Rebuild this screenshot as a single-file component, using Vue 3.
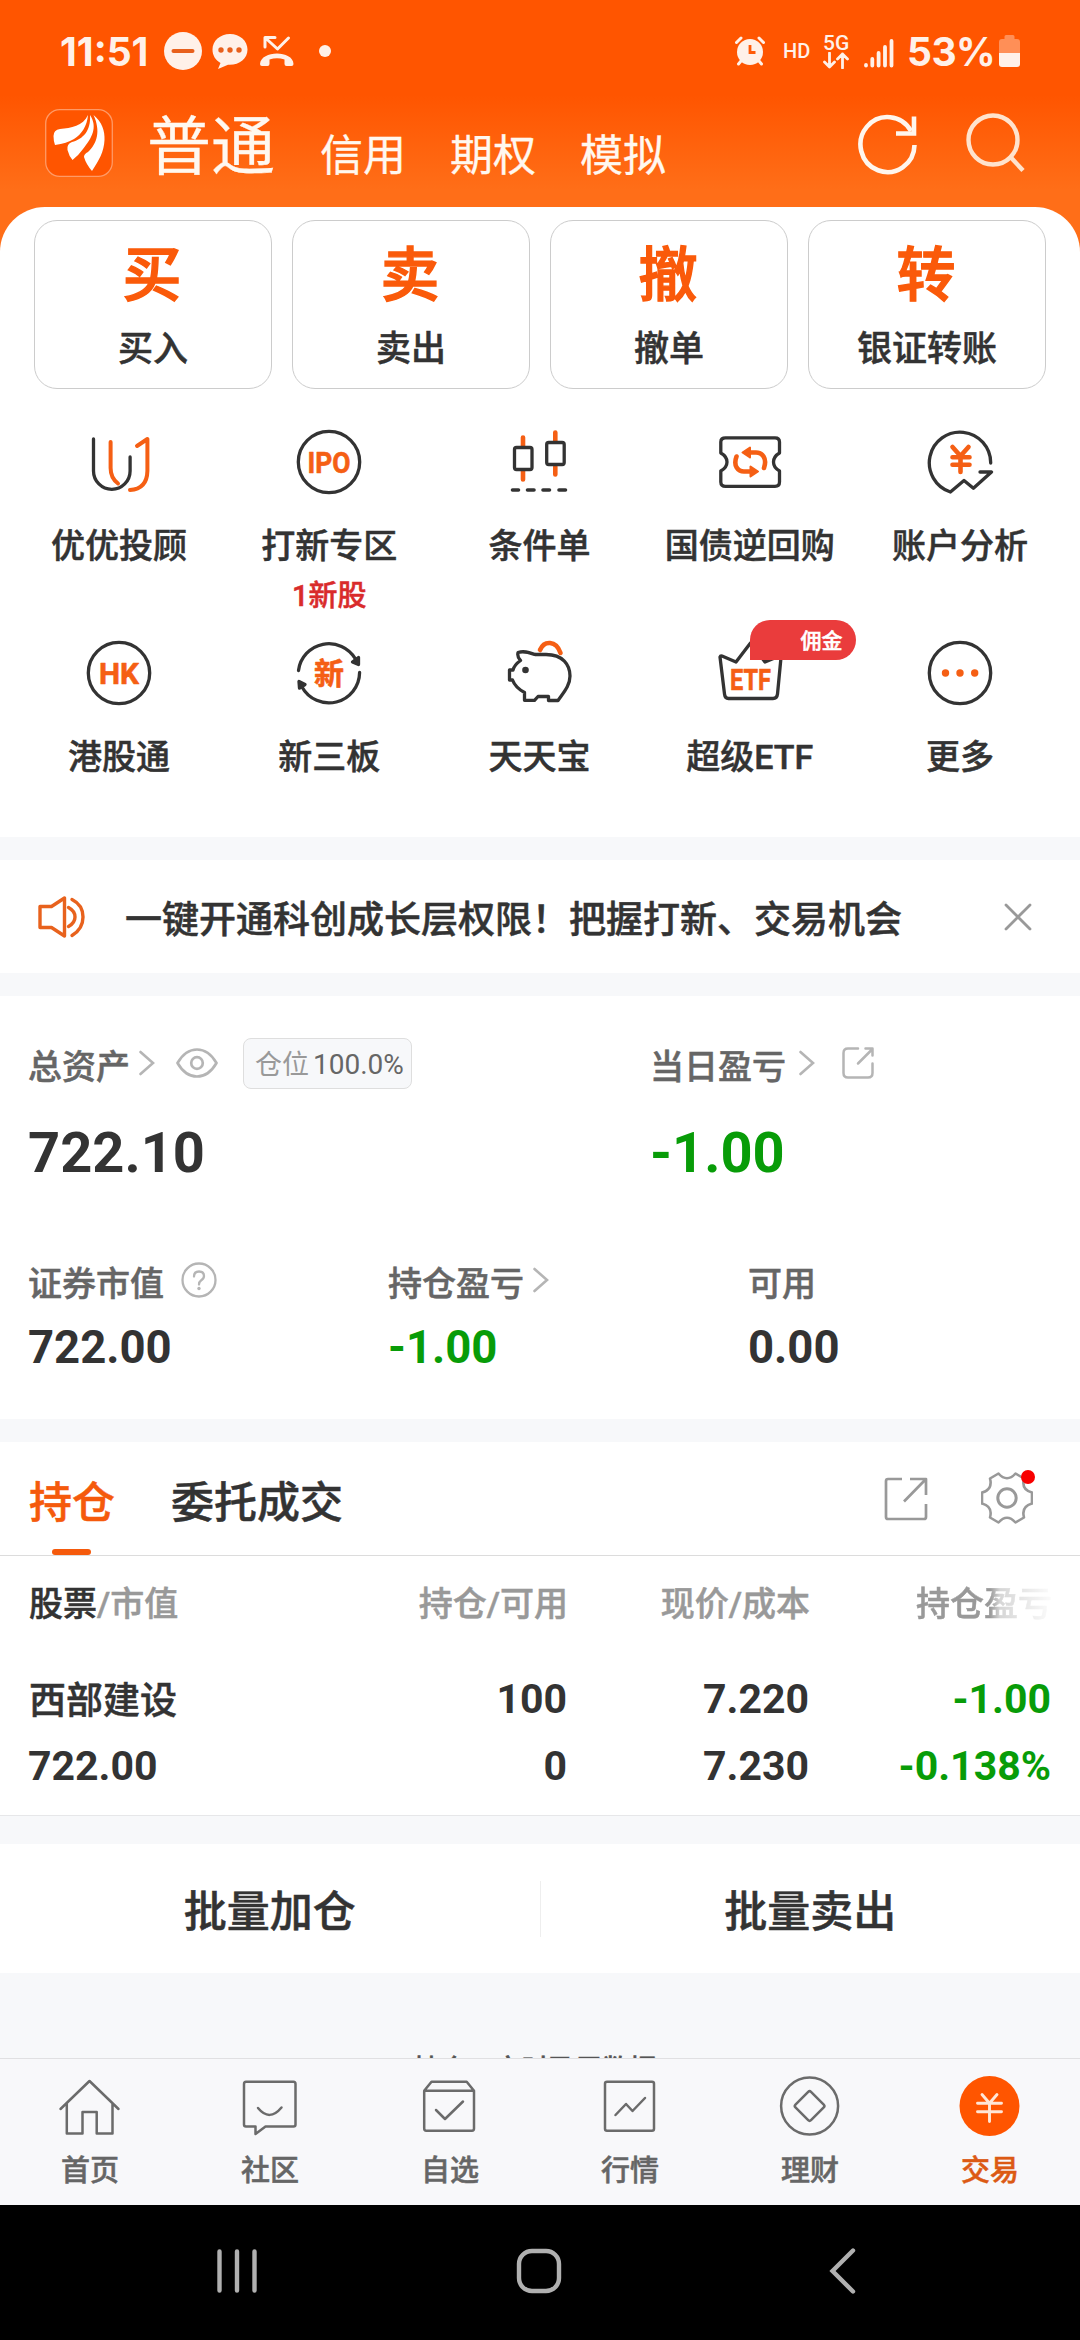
<template>
  <div class="page">
    <div class="top">
      <div class="status">
        <span class="time">11:51</span>
        <svg class="dnd" width="38" height="38" viewBox="0 0 38 38">
          <circle cx="19" cy="19" r="19" fill="#fff1e9" />
          <path d="M9.500 19H28.500" stroke="#e8601c" stroke-width="4" stroke-linecap="round" />
        </svg>
        <svg class="chat" width="36" height="38" viewBox="0 0 36 38">
          <path d="M18 2C8 2 .5 9 .5 17.500c0 6 3 10.500 8 13.500L6 37l10-4.200C27 33.500 35.500 27 35.500 17.500 35.500 9 28 2 18 2z" fill="#fff1e9" />
          <circle cx="9" cy="18" r="2.700" fill="#e8601c" />
          <circle cx="18" cy="18" r="2.700" fill="#e8601c" />
          <circle cx="27" cy="18" r="2.700" fill="#e8601c" />
        </svg>
        <svg class="missed" width="34" height="32" viewBox="0 0 34 32">
          <path d="M5 12V2.500H15M5.500 3L17.500 14L28.500 3" fill="none" stroke="#fff1e9" stroke-width="3" stroke-linecap="round" stroke-linejoin="round" />
          <path d="M0 29C1 15 33 15 33.500 29q0 2-2 2h-5q-2 0-2-2v-4.500q-7.500-2.500-15 0V29q0 2-2 2H2Q0 31 0 29z" fill="#fff1e9" />
        </svg>
        <span class="dot"></span>
        <span class="spacer"></span>
        <svg class="alarm" width="30" height="30" viewBox="0 0 30 30">
          <circle cx="15" cy="16" r="13" fill="#fff1e9" />
          <path d="M1.500 6.500L6 2M28.500 6.500L24 2M6 25L3.500 28M24 25L26.500 28" stroke="#fff1e9" stroke-width="3" stroke-linecap="round" />
          <path d="M15 9V16.500H20.500" fill="none" stroke="#ff5a08" stroke-width="2.800" />
        </svg>
        <span class="hd">HD</span>
        <div class="net">
          <span class="net-label">5G</span>
          <svg width="26" height="17" viewBox="0 0 26 17">
            <path d="M6.500 1V15M1.500 10L6.500 15L11.500 10M19.500 16V2M14.500 7L19.500 2L24.500 7" fill="none" stroke="#fff1e9" stroke-width="2.800" stroke-linecap="round" stroke-linejoin="round" />
          </svg>
        </div>
        <svg class="signal" width="30" height="30" viewBox="0 0 30 30">
          <path d="M2 27.500V27M8.300 27.500V21M14.600 27.500V15M21 27.500V9M27.500 27.500V3" stroke="#fff1e9" stroke-width="3.800" stroke-linecap="round" />
        </svg>
        <span class="percent">53%</span>
        <svg width="21" height="32" viewBox="0 0 21 32">
          <path d="M5.500 1.500Q5.500 0 7 0h7q1.500 0 1.500 1.500V4H18q3 0 3 3v11H0V7q0-3 3-3h2.500z" fill="#ff8f57" />
          <path d="M0 18h21v11q0 3-3 3H3q-3 0-3-3z" fill="#fff1e9" />
        </svg>
      </div>

      <div class="header">
        <svg class="logo" width="68" height="68" viewBox="0 0 68 68">
          <rect x=".7" y=".7" width="66.600" height="66.600" rx="14" fill="#ff5500" stroke="#ff9a66" stroke-width="1.300" />
          <g fill="#fff">
            <path d="M43 6C38 17 26 19 15 20Q8.500 21 8.500 27 8.500 32 10 36C18 35 24 33 29 30 37 25 42 17 43 6z" />
            <path d="M45 6C46 22 38 30 27 33Q21.500 35 22.500 41 24 47 27.500 51 33 47 38 40C47 29 53 18 45 6z" />
            <path d="M48.500 6C57 13 60 22 59.500 31 59 43 54 51 47 62Q41 55 39 48 39 45 43 43C52 35 56 22 48.500 6z" />
          </g>
        </svg>
        <div class="accounts">
          <span class="account active">普通</span>
          <span class="account">信用</span>
          <span class="account">期权</span>
          <span class="account">模拟</span>
        </div>
        <svg class="refresh" width="62" height="64" viewBox="0 0 62 64">
          <path d="M57.500 33A27 27.500 0 1 1 54 19" fill="none" stroke="#fff6ee" stroke-width="4.600" />
          <path d="M57 4.500V21.500H39" fill="none" stroke="#fff6ee" stroke-width="4.600" />
        </svg>
        <svg class="search" width="60" height="64" viewBox="0 0 60 64">
          <circle cx="27" cy="29" r="24.500" fill="none" stroke="#ffe3cd" stroke-width="4.400" />
          <path d="M44.500 46L57 59.500" stroke="#ffe3cd" stroke-width="4.400" />
        </svg>
      </div>

      <div class="sheet">
        <div class="quick">
          <div v-for="item in quick" :key="item.label" class="quick-card">
            <span class="quick-glyph">{{ item.glyph }}</span>
            <span class="quick-label">{{ item.label }}</span>
          </div>
        </div>

        <div class="features">
          <div v-for="item in features" :key="item.icon" class="feature">
            <svg width="68" height="68" viewBox="0 0 68 68" fill="none" stroke="#333" stroke-width="3.300" stroke-linecap="round" stroke-linejoin="round">
              <template v-if="item.icon === 'advisor'">
                <path d="M8.500 11V43A18.300 18.300 0 0 0 45.100 43V29" />
                <path d="M25.600 14V40Q25.600 50 33 55.500M52 18L62.400 11V43Q62 61 45 62" stroke="#f55f14" stroke-width="4" />
              </template>
              <template v-else-if="item.icon === 'ipo'">
                <circle cx="34" cy="34" r="30.700" />
                <text class="icon-text" x="34" y="44.500" textLength="43" lengthAdjust="spacingAndGlyphs">IPO</text>
              </template>
              <template v-else-if="item.icon === 'candles'">
                <path d="M18 9.500V18M18 43V51.500M50.300 4.500V13M50.300 38.500V46.500" stroke="#f55f14" stroke-width="4.600" />
                <rect x="9.500" y="19.500" width="17.500" height="22" rx="2" />
                <rect x="41.700" y="14.500" width="17.500" height="22" rx="2" />
                <path d="M7.500 62H13.500M22.500 62H29M38 62H44.500M54 62H60.500" stroke-width="3.600" />
              </template>
              <template v-else-if="item.icon === 'ticket'">
                <path d="M9.500 9.800H59Q63.500 9.800 63.500 14V25Q57.500 28.500 57.500 34 57.500 39.500 63.500 43V54Q63.500 58.300 59 58.300H9.500Q4.800 58.300 4.800 54V43Q11 39.500 11 34 11 28.500 4.800 25V14Q4.800 9.800 9.500 9.800z" />
                <path d="M48 40C51.500 30 46 24.500 40 24.500H34M20.500 28.500C17 38 22 43.500 28 43.500H34" stroke="#f55f14" stroke-width="4.600" />
                <path d="M26.500 24.500L34 19.500V29.500zM42 43.500L34.500 38.500V48.500z" fill="#f55f14" stroke="#f55f14" stroke-width="2" />
              </template>
              <template v-else-if="item.icon === 'analysis'">
                <path d="M64.700 35A30.700 30.700 0 1 0 24.400 64L38 52.500L47.400 60.300L65.500 44H54" />
                <path d="M26.500 19L34.500 28L42.500 19M34.500 28V44M26.500 29.300H43.500M26.500 36.700H43.500" stroke="#f55f14" stroke-width="4.600" />
              </template>
              <template v-else-if="item.icon === 'hk'">
                <circle cx="34" cy="34" r="30.700" />
                <text class="icon-text" x="34" y="44.500" textLength="40" lengthAdjust="spacingAndGlyphs">HK</text>
              </template>
              <template v-else-if="item.icon === 'neeq'">
                <path d="M3.500 31.500A30.700 30.700 0 0 1 60.500 20M64.600 33.500A30.700 30.700 0 0 1 7 48" />
                <path d="M57.500 23L63.500 18.500V25.500zM4 42.500L4.500 49L10 45.500z" fill="#333" />
                <text class="icon-text" x="34" y="44.500">新</text>
              </template>
              <template v-else-if="item.icon === 'piggy'">
                <path d="M35 11C39 1.500 51 1 55.500 14" stroke="#f55f14" stroke-width="4.600" />
                <path d="M13 13.500C19 11.500 24 13.500 30 15.500H41C58 15.500 65 26 65 37 65 47 58 54 53 61.500H43.500V57.500H33L29.500 61.300H19.500V53.500C13 50 9 45 7.500 41H4.500V31H8C9 27 12 24 15.500 21.500Q12 18 13 13.500z" />
                <circle cx="20.500" cy="31" r="3.300" fill="#333" stroke="none" />
              </template>
              <template v-else-if="item.icon === 'etf'">
                <path d="M4 18Q4.500 16.500 6 17L20 23L34.500 4L49 23L63.500 17Q65.500 16.500 65 18.500L61.500 55Q61 59.500 57 59.500H12.500Q9 59.500 8.500 55z" />
                <text class="icon-text" x="34.500" y="50.500" textLength="41" lengthAdjust="spacingAndGlyphs">ETF</text>
              </template>
              <template v-else>
                <circle cx="34" cy="34" r="30.700" />
                <g fill="#f55f14" stroke="none">
                  <circle cx="19.500" cy="34" r="3.700" />
                  <circle cx="34" cy="34" r="3.700" />
                  <circle cx="48.700" cy="34" r="3.700" />
                </g>
              </template>
            </svg>
            <span class="feature-label">{{ item.label }}</span>
            <span v-if="item.note" class="feature-note">{{ item.note }}</span>
            <span v-if="item.badge" class="feature-badge">{{ item.badge }}</span>
          </div>
        </div>
      </div>
    </div>

    <div class="notice">
      <svg width="48" height="42" viewBox="0 0 48 42" fill="none" stroke="#e8621d" stroke-width="3.400" stroke-linejoin="round">
        <path d="M2 10.500H13.500L26.500 2V40L13.500 31.500H2z" />
        <path d="M30.500 11.500Q37 15 37 21 37 27 30.500 30.500M34 3.500Q45 9 45 21 45 33 34 39.500" stroke-linecap="round" />
      </svg>
      <span class="notice-text">一键开通科创成长层权限！把握打新、交易机会</span>
      <svg class="close" width="28" height="28" viewBox="0 0 28 28">
        <path d="M2 2L26 26M26 2L2 26" stroke="#999" stroke-width="2.800" stroke-linecap="round" />
      </svg>
    </div>

    <div class="assets">
      <div class="asset-main">
        <div class="asset">
          <div class="asset-label">
            总资产
            <svg class="chevron near" width="16" height="26" viewBox="0 0 16 26"><path d="M1.500 2L14 13L1.500 24" /></svg>
            <svg class="eye" width="42" height="30" viewBox="0 0 42 30" fill="none" stroke="#b5b5b5" stroke-width="2.700">
              <path d="M1.500 15C12 -3 30 -3 40.500 15 30 33 12 33 1.500 15z" stroke-linejoin="round" />
              <circle cx="21" cy="15" r="5.800" />
            </svg>
            <span class="position"><span class="position-name">仓位</span>100.0%</span>
          </div>
          <div class="asset-value">722.10</div>
        </div>
        <div class="asset">
          <div class="asset-label">
            当日盈亏
            <svg class="chevron far" width="16" height="26" viewBox="0 0 16 26"><path d="M1.500 2L14 13L1.500 24" /></svg>
            <svg class="share-small" width="32" height="34" viewBox="0 0 32 34" fill="none" stroke="#b5b5b5" stroke-width="2.500" stroke-linecap="round" stroke-linejoin="round">
              <path d="M16 2.500H6Q1.500 2.500 1.500 7V27Q1.500 31.500 6 31.500H26Q30.500 31.500 30.500 27V17.500M16 17.500L30 3.500M23.500 2.500H30.500V9.500" />
            </svg>
          </div>
          <div class="asset-value down">-1.00</div>
        </div>
      </div>
      <div class="asset-sub">
        <div class="asset small">
          <div class="asset-label">
            证券市值
            <svg class="help" width="36" height="36" viewBox="0 0 36 36" fill="none" stroke="#b5b5b5" stroke-width="2.300">
              <circle cx="18" cy="18" r="16.500" />
              <path d="M13 14.500Q13 9.500 18 9.500 23 9.500 23 14 23 16.500 20 18.500 18 20 18 22.500" stroke-linecap="round" />
              <circle cx="18" cy="26.500" r="1.700" fill="#b5b5b5" stroke="none" />
            </svg>
          </div>
          <div class="asset-value">722.00</div>
        </div>
        <div class="asset small">
          <div class="asset-label">
            持仓盈亏
            <svg class="chevron near" width="16" height="26" viewBox="0 0 16 26"><path d="M1.500 2L14 13L1.500 24" /></svg>
          </div>
          <div class="asset-value down">-1.00</div>
        </div>
        <div class="asset small">
          <div class="asset-label">可用</div>
          <div class="asset-value">0.00</div>
        </div>
      </div>
    </div>

    <div class="holdings">
      <div class="tabs">
        <span class="tab active">持仓</span>
        <span class="tab">委托成交</span>
        <svg class="share" width="44" height="44" viewBox="0 0 44 44" fill="none" stroke="#999" stroke-width="2.700" stroke-linejoin="round">
          <path d="M18 2H4Q2 2 2 4V40Q2 42 4 42H40Q42 42 42 40V27M26 2H42V18M41 3L20 24.500" />
        </svg>
        <div class="settings">
          <svg width="52" height="52" viewBox="0 0 52 52" fill="none" stroke="#999" stroke-width="2.600" stroke-linejoin="round">
            <path d="M17.500 1.500Q26 11 34.500 1.500L43 6.500Q40 17.500 51 20.500V31.500Q40 34.500 43 45.500L34.500 50.500Q26 41 17.500 50.500L9 45.500Q12 34.500 1 31.500V20.500Q12 17.500 9 6.500z" />
            <circle cx="26" cy="26" r="9.200" stroke-width="3" />
          </svg>
          <span class="red-dot"></span>
        </div>
      </div>
      <div class="row head">
        <span class="name"><b>股票</b>/市值</span>
        <span>持仓/可用</span>
        <span>现价/成本</span>
        <span class="fade">持仓盈亏</span>
      </div>
      <div v-for="stock in stocks" :key="stock.name" class="stock">
        <div class="row">
          <span class="name">{{ stock.name }}</span>
          <span>{{ stock.amount }}</span>
          <span>{{ stock.price }}</span>
          <span class="down">{{ stock.profit }}</span>
        </div>
        <div class="row second">
          <span class="name">{{ stock.value }}</span>
          <span>{{ stock.available }}</span>
          <span>{{ stock.cost }}</span>
          <span class="down">{{ stock.rate }}</span>
        </div>
      </div>
    </div>

    <div class="batch">
      <span>批量加仓</span>
      <i class="batch-line"></i>
      <span>批量卖出</span>
    </div>

    <div class="more"><span>持仓、实时盈亏数据</span></div>

    <div class="tabbar">
      <div v-for="item in menus" :key="item.icon" class="menu" :class="{ active: item.icon === 'trade' }">
        <svg width="68" height="68" viewBox="0 0 68 68" fill="none" stroke="#6b6b6b" stroke-width="2.500" stroke-linecap="round" stroke-linejoin="round">
          <template v-if="item.icon === 'home'">
            <path d="M4.500 37L33.500 9L62.500 37M10.800 32V61.500H26.500V40H40.700V61.500H56.500V32" />
          </template>
          <template v-else-if="item.icon === 'social'">
            <path d="M10 9.700H57.500Q59.500 9.700 59.500 12V52.500Q59.500 54.500 57.500 54.500H29.500L19.500 62V54.500H10Q8 54.500 8 52.500V12Q8 9.700 10 9.700z" />
            <path d="M22 36Q33.500 50 45.500 35.500" />
          </template>
          <template v-else-if="item.icon === 'watch'">
            <path d="M8.200 18.700L15.500 9.700H50.700L58 18.700V56.500Q58 58.700 56 58.700H10.200Q8.200 58.700 8.200 56.500V18.700H58M20 38L29 47L47 29.500" />
          </template>
          <template v-else-if="item.icon === 'market'">
            <rect x="9" y="9.700" width="49" height="49" rx="2" />
            <path d="M19.500 43L30 32L36.500 39L49 26" />
          </template>
          <template v-else-if="item.icon === 'wealth'">
            <circle cx="33.600" cy="34" r="28.500" />
            <rect x="22.600" y="23" width="22" height="22" rx="2" transform="rotate(45 33.600 34)" />
          </template>
          <template v-else>
            <circle cx="33.500" cy="34" r="30" fill="#ff5500" stroke="none" />
            <path d="M26 22.500L33.500 31.300L41 22.500M33.500 31.300V49.500M21.500 31.300H45.500M21.500 39.700H45.500" stroke="#ffe6d6" stroke-width="2.900" />
          </template>
        </svg>
        <span class="menu-label">{{ item.label }}</span>
      </div>
    </div>

    <div class="navbar">
      <svg width="40" height="44" viewBox="0 0 40 44">
        <path d="M2.500 2.500V41.500M20 2.500V41.500M37.500 2.500V41.500" stroke="#b0b0b0" stroke-width="4.400" stroke-linecap="round" />
      </svg>
      <svg class="nav-home" width="46" height="46" viewBox="0 0 46 46">
        <rect x="3" y="3" width="40" height="40" rx="13" fill="none" stroke="#b0b0b0" stroke-width="4.400" />
      </svg>
      <svg class="nav-back" width="28" height="46" viewBox="0 0 28 46">
        <path d="M25 2.500L4.500 23L25 43.500" fill="none" stroke="#b0b0b0" stroke-width="4.400" stroke-linecap="round" />
      </svg>
    </div>
  </div>
</template>

<script setup>
const quick = [
  { glyph: '买', label: '买入' },
  { glyph: '卖', label: '卖出' },
  { glyph: '撤', label: '撤单' },
  { glyph: '转', label: '银证转账' }
]

const features = [
  { icon: 'advisor', label: '优优投顾' },
  { icon: 'ipo', label: '打新专区', note: '1新股' },
  { icon: 'candles', label: '条件单' },
  { icon: 'ticket', label: '国债逆回购' },
  { icon: 'analysis', label: '账户分析' },
  { icon: 'hk', label: '港股通' },
  { icon: 'neeq', label: '新三板' },
  { icon: 'piggy', label: '天天宝' },
  { icon: 'etf', label: '超级ETF', badge: '佣金' },
  { icon: 'more', label: '更多' }
]

const stocks = [
  {
    name: '西部建设',
    value: '722.00',
    amount: '100',
    available: '0',
    price: '7.220',
    cost: '7.230',
    profit: '-1.00',
    rate: '-0.138%'
  }
]

const menus = [
  { icon: 'home', label: '首页' },
  { icon: 'social', label: '社区' },
  { icon: 'watch', label: '自选' },
  { icon: 'market', label: '行情' },
  { icon: 'wealth', label: '理财' },
  { icon: 'trade', label: '交易' }
]
</script>

<style>
body {
  margin: 0;
  background: #f7f8fa;
}
</style>

<style scoped>
.page {
  width: 1080px;
  height: 2340px;
  overflow: hidden;
  background: #f7f8fa;
  color: #333;
  font-family: Roboto, "Noto Sans CJK SC", sans-serif;
  font-weight: 500;
  -webkit-text-stroke-width: 0.5px;
}

.page * {
  box-sizing: border-box;
}

svg {
  display: block;
  flex: none;
}

span {
  white-space: nowrap;
}

.down {
  color: #089c08;
}

/* status bar and header */
.top {
  background: linear-gradient(#ff5500 0, #ff5500 95px, #ff6e18 190px);
}

.status {
  display: flex;
  align-items: center;
  height: 102px;
  padding: 0 60px;
  color: #fff1e9;
  -webkit-text-stroke-width: 0;
}

.time,
.percent {
  font-family: Inter, Roboto, sans-serif;
  font-size: 39px;
  font-weight: 700;
}

.time {
  width: 103.5px;
}

.chat {
  margin-left: 10px;
}

.missed {
  margin-left: 12.5px;
}

.dot {
  width: 12px;
  height: 12px;
  margin-left: 25px;
  border-radius: 50%;
  background: #fff1e9;
}

.spacer {
  flex: 1;
}

.hd {
  width: 25px;
  margin: 0 15px 0 18px;
  font-size: 20px;
}

.net {
  width: 26px;
}

.net-label {
  display: block;
  font-size: 21px;
  line-height: 18px;
  padding-top: 1px;
}

.signal {
  margin: 3px 13px 0 15px;
}

.percent {
  width: 92px;
  letter-spacing: -0.5px;
}

.header {
  display: flex;
  height: 105px;
  padding: 7px 54px 0 45px;
}

.accounts {
  display: flex;
  flex: 1;
  align-items: flex-end;
  height: 74px;
  padding-left: 34px;
  color: #fff8f0;
  font-weight: 400;
  -webkit-text-stroke-width: 0.3px;
}

.account {
  margin-right: 44px;
  font-size: 43px;
  line-height: 53px;
}

.account.active {
  margin-right: 45px;
  font-size: 64px;
  line-height: 70px;
}

.refresh {
  margin: 3px 47px 0 0;
}

.search {
  margin: 2px 0 0;
}

/* white sheet */
.sheet {
  height: 630px;
  padding-top: 13px;
  border-radius: 45px 45px 0 0;
  background: #fff;
}

.quick {
  display: grid;
  grid-template-columns: repeat(4, 238px);
  gap: 20px;
  padding-left: 34px;
}

.quick-card {
  display: flex;
  flex-direction: column;
  align-items: center;
  height: 169px;
  padding-top: 20px;
  border: 1px solid #ccc;
  border-radius: 23px;
}

.quick-glyph {
  margin-right: 2px;
  color: #fa5a0a;
  font-size: 59px;
  line-height: 70px;
  -webkit-text-stroke-width: 1.4px;
}

.quick-label {
  margin-top: 17px;
  font-size: 35px;
  line-height: 44px;
}

.features {
  display: grid;
  grid-template-columns: repeat(5, 1fr);
  grid-auto-rows: 211px;
  padding: 39px 15px 0 14px;
}

.feature {
  position: relative;
  display: flex;
  flex-direction: column;
  align-items: center;
}

.icon-text {
  fill: #f55f14;
  stroke: #f55f14;
  stroke-width: 0.6px;
  font-size: 30px;
  font-weight: 700;
  text-anchor: middle;
}

.feature-label {
  margin-top: 28px;
  font-size: 34px;
  line-height: 44px;
}

.feature-note {
  margin-top: 10px;
  color: #d92b2b;
  font-size: 29px;
  line-height: 36px;
}

.feature-badge {
  position: absolute;
  top: -19px;
  left: 105px;
  width: 106px;
  height: 40px;
  padding-left: 51px;
  border-radius: 20px 20px 20px 0;
  background: #ea3c3c;
  color: #fff;
  font-size: 21px;
  line-height: 43px;
}

/* notice */
.notice {
  display: flex;
  align-items: center;
  height: 113px;
  margin: 23px 0;
  padding: 0 48px 0 38px;
  background: #fff;
}

.notice-text {
  flex: 1;
  padding: 9px 0 0 39px;
  font-size: 37px;
  line-height: 50px;
}

/* assets */
.assets {
  height: 423px;
  padding-top: 42px;
  background: #fff;
}

.asset-main {
  display: grid;
  grid-template-columns: 622px 1fr;
  padding-left: 28px;
}

.asset-sub {
  display: grid;
  grid-template-columns: repeat(3, 360px);
  padding: 70px 0 0 28px;
}

.asset-label {
  display: flex;
  align-items: center;
  height: 51px;
  padding-top: 7px;
  color: #666;
  font-size: 34px;
  line-height: 50px;
}

.asset-label svg {
  margin-bottom: 8px;
}

.chevron {
  fill: none;
  stroke: #b5b5b5;
  stroke-width: 2.6;
  stroke-linecap: round;
}

.chevron.near {
  margin-left: 9px;
}

.chevron.far {
  margin-left: 13px;
}

.eye {
  margin-left: 21px;
}

.help {
  margin-left: 17px;
}

.share-small {
  margin-left: 27px;
}

.position {
  height: 51px;
  margin: 0 0 7px 25px;
  padding: 0 7px 0 11px;
  border: 1px solid #dedede;
  border-radius: 8px;
  background: #f7f8fa;
  font-size: 28px;
  font-weight: 400;
  line-height: 51px;
  -webkit-text-stroke-width: 0;
}

.position-name {
  margin-right: 4px;
  color: #999;
  font-size: 27px;
}

.asset-value {
  margin-top: 32px;
  font-size: 56px;
  font-weight: 700;
  line-height: 64px;
  -webkit-text-stroke-width: 0;
}

.small .asset-value {
  margin-top: 14px;
  font-size: 45.5px;
  line-height: 56px;
}

/* holdings */
.holdings {
  height: 374px;
  margin-top: 23px;
  border-bottom: 1px solid #e6e7e9;
  background: #fff;
}

.tabs {
  display: flex;
  align-items: center;
  height: 114px;
  padding: 0 47px 0 29px;
  border-bottom: 1px solid #dcdcdc;
}

.tab {
  position: relative;
  height: 114px;
  margin-right: 56px;
  font-size: 43px;
  line-height: 122px;
}

.tab.active {
  color: #f55a0c;
}

.tab.active::after {
  content: "";
  position: absolute;
  bottom: 1px;
  left: 23px;
  width: 39px;
  height: 6px;
  border-radius: 3px;
  background: #f55a0c;
}

.share {
  margin-left: auto;
}

.settings {
  position: relative;
  margin: -2px 0 0 53px;
}

.red-dot {
  position: absolute;
  top: -2px;
  left: 40px;
  width: 14px;
  height: 14px;
  border-radius: 50%;
  background: #f80000;
}

.row {
  display: grid;
  grid-template-columns: 240px 299px 242px 242px;
  padding-left: 28px;
  text-align: right;
  font-size: 41px;
  font-weight: 700;
  line-height: 67px;
  -webkit-text-stroke-width: 0;
}

.row .name {
  text-align: left;
}

.row.head {
  padding-left: 29px;
  color: #999;
  font-size: 34px;
  font-weight: 500;
  line-height: 96px;
  -webkit-text-stroke-width: 0.5px;
}

.row.head b {
  color: #333;
  font-weight: 500;
}

.fade {
  -webkit-mask-image: linear-gradient(90deg, #000 180px, rgba(0, 0, 0, 0.4) 190px, transparent 246px);
  mask-image: linear-gradient(90deg, #000 180px, rgba(0, 0, 0, 0.4) 190px, transparent 246px);
}

.stock {
  padding-top: 14px;
}

.stock .row:first-child .name {
  padding: 4px 0 0 1px;
  font-size: 37px;
  font-weight: 500;
  line-height: 63px;
  -webkit-text-stroke-width: 0.5px;
}

/* batch actions */
.batch {
  display: flex;
  align-items: center;
  height: 129px;
  margin-top: 28px;
  background: #fff;
}

.batch span {
  flex: 1;
  padding-top: 7px;
  text-align: center;
  font-size: 43px;
  line-height: 60px;
}

.batch-line {
  width: 1px;
  height: 56px;
  background: #eee;
}

.more {
  height: 85px;
  padding: 81px 10px 0 0;
  overflow: hidden;
  text-align: center;
  color: #555;
  font-size: 27px;
  line-height: 32px;
}

/* bottom tabs */
.tabbar {
  display: grid;
  grid-template-columns: repeat(6, 180px);
  height: 147px;
  padding-top: 13px;
  border-top: 1px solid #e0e0e2;
  background: #f8f8fa;
}

.menu {
  display: flex;
  flex-direction: column;
  align-items: center;
  color: #666;
}

.menu.active {
  color: #dc5a14;
}

.menu-label {
  margin-top: 12px;
  font-size: 29px;
  line-height: 38px;
}

.navbar {
  display: flex;
  align-items: center;
  height: 135px;
  padding: 0 0 3px 217px;
  background: #000;
}

.nav-home {
  margin-left: 259px;
}

.nav-back {
  margin-left: 266px;
}
</style>
